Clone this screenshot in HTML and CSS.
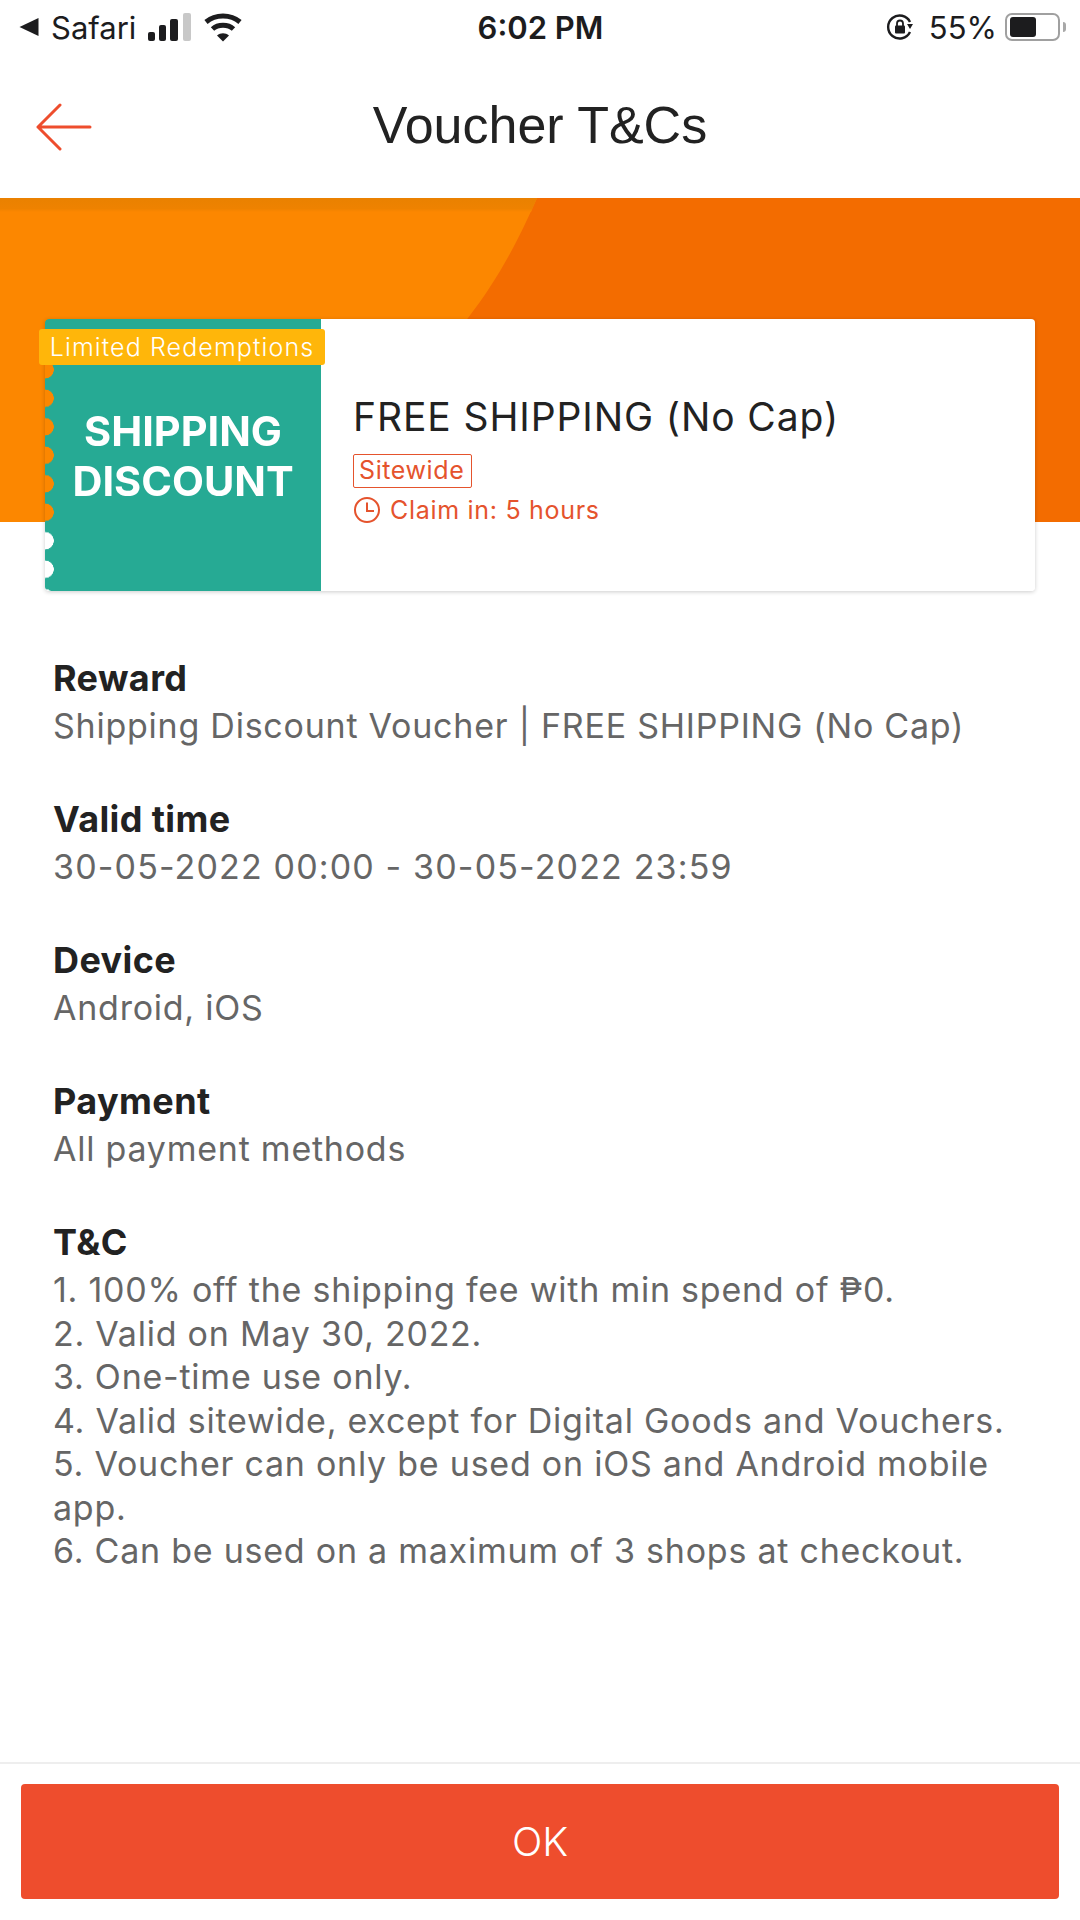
FILE: index.html
```html
<!DOCTYPE html>
<html lang="en">
<head>
    <meta charset="UTF-8">
    <meta name="viewport" content="width=device-width, initial-scale=1.0">
    <title>Voucher T&amp;Cs</title>
    <link rel="stylesheet" href="styles.css">
</head>
<body>
    <div class="page">
        <div class="status-bar">
            <div class="status-left">
                <svg class="back-tri" width="20" height="20" viewBox="0 0 20 20"><path d="M19.500 1v18L.5 10z" fill="#1c1c1e"/></svg>
                <span>Safari</span>
                <svg class="signal" width="43" height="28" viewBox="0 0 43 28">
                    <rect x="0" y="19" width="7" height="9" rx="2" fill="#1c1c1e"/>
                    <rect x="11" y="12" width="7" height="16" rx="2" fill="#1c1c1e"/>
                    <rect x="22" y="6" width="8" height="22" rx="2" fill="#1c1c1e"/>
                    <rect x="35" y="0" width="8" height="28" rx="2" fill="#c8c8c8"/>
                </svg>
                <svg class="wifi" width="38" height="30" viewBox="0 0 38 30">
                    <path d="M2 10C11.500 2 26.500 2 36 10" fill="none" stroke="#1c1c1e" stroke-width="5"/>
                    <path d="M8.500 17C14 12 24 12 29.500 17" fill="none" stroke="#1c1c1e" stroke-width="5"/>
                    <path d="M13 23.500C16.500 20.500 21.500 20.500 25 23.500L19 29.500z" fill="#1c1c1e"/>
                </svg>
            </div>
            <div class="status-time">6:02 PM</div>
            <div class="status-right">
                <svg class="lock" width="28" height="28" viewBox="0 0 28 28">
                    <path d="M24 19A11.500 11.500 0 1 1 24 9" fill="none" stroke="#1c1c1e" stroke-width="2.400"/>
                    <path d="M21 11h6l-3 5z" fill="#1c1c1e"/>
                    <rect x="9" y="12.500" width="10" height="8" rx="1" fill="#1c1c1e"/>
                    <path d="M11 13V10.500a3 3 0 0 1 6 0V13" fill="none" stroke="#1c1c1e" stroke-width="1.800"/>
                </svg>
                <span>55%</span>
                <div class="battery"><div class="battery-fill"></div></div>
                <div class="battery-tip"></div>
            </div>
        </div>

        <div class="title-bar">
            <svg class="back-arrow" width="56" height="48" viewBox="0 0 56 48">
                <path d="M54 24H2M24 2L2 24l22 22" fill="none" stroke="#ee4d2d" stroke-width="3" stroke-linecap="round" stroke-linejoin="round"/>
            </svg>
            <h1 class="title">Voucher T&amp;Cs</h1>
        </div>

        <div class="hero">
            <svg class="hero-wave" width="540" height="324" viewBox="0 0 540 324">
                <defs>
                    <linearGradient id="wave-shade" x1="0" y1="0" x2="0" y2="1">
                        <stop offset="0" stop-color="#ea8100"/>
                        <stop offset="0.75" stop-color="#ee8200"/>
                        <stop offset="1" stop-color="#fc8700"/>
                    </linearGradient>
                </defs>
                <path d="M0 0H537C515 50 495 85 468 120C430 165 400 200 380 324H0z" fill="#fc8700"/>
                <path d="M0 0H537L531 14H0z" fill="url(#wave-shade)"/>
            </svg>
            <div class="ticket">
                <div class="ticket-tag">Limited Redemptions</div>
                <div class="ticket-left">SHIPPING<br>DISCOUNT</div>
                <div class="ticket-right">
                    <div class="ticket-title">FREE SHIPPING (No Cap)</div>
                    <div class="ticket-label">Sitewide</div>
                    <div class="ticket-claim">
                        <svg width="28" height="28" viewBox="0 0 28 28">
                            <circle cx="14" cy="14" r="12" fill="none" stroke="#e5532d" stroke-width="2"/>
                            <path d="M14 6.500V15H21" fill="none" stroke="#e5532d" stroke-width="2"/>
                        </svg>
                        <span>Claim in: 5 hours</span>
                    </div>
                </div>
            </div>
        </div>

        <div class="details">
            <div class="section">
                <div class="section-head">Reward</div>
                <div class="section-body">Shipping Discount Voucher | FREE SHIPPING (No Cap)</div>
            </div>
            <div class="section">
                <div class="section-head">Valid time</div>
                <div class="section-body section-date">30-05-2022 00:00 - 30-05-2022 23:59</div>
            </div>
            <div class="section">
                <div class="section-head">Device</div>
                <div class="section-body">Android, iOS</div>
            </div>
            <div class="section">
                <div class="section-head">Payment</div>
                <div class="section-body">All payment methods</div>
            </div>
            <div class="section">
                <div class="section-head">T&amp;C</div>
                <div class="section-body">
                    1. 100% off the shipping fee with min spend of ₱0.<br>
                    2. Valid on May 30, 2022.<br>
                    3. One-time use only.<br>
                    4. Valid sitewide, except for Digital Goods and Vouchers.<br>
                    5. Voucher can only be used on iOS and Android mobile app.<br>
                    6. Can be used on a maximum of 3 shops at checkout.
                </div>
            </div>
        </div>

        <div class="footer">
            <button class="ok-btn">OK</button>
        </div>
    </div>
</body>
</html>
```

FILE: styles.css
```css
* {
    box-sizing: border-box;
}
body {
    margin: 0;
    background-color: #fff;
    font-family: Inter, "Liberation Sans", sans-serif;
    color: #222;
}
.page {
    width: 1080px;
    height: 1920px;
    display: flex;
    flex-direction: column;
    overflow: hidden;
}
.status-bar {
    height: 54px;
    padding: 0 14px 0 19px;
    display: grid;
    grid-template-columns: 1fr auto 1fr;
    align-items: center;
    font-size: 31px;
    color: #1c1c1e;
}
.status-left {
    display: flex;
    align-items: center;
    gap: 12px;
}
.status-left .wifi {
    margin-left: 1px;
}
.status-time {
    font-weight: 600;
    margin-left: -4px;
}
.status-right {
    display: flex;
    align-items: center;
    justify-content: flex-end;
}
.status-right span {
    margin-left: 15px;
}
.battery {
    width: 55px;
    height: 28px;
    margin-left: 8px;
    padding: 2px 3px;
    border: 2px solid #a0a0a0;
    border-radius: 7px;
}
.battery-fill {
    width: 26px;
    height: 100%;
    background-color: #1c1c1e;
    border-radius: 3px;
}
.battery-tip {
    width: 3px;
    height: 10px;
    margin-left: 3px;
    background-color: #a8a8a8;
    border-radius: 0 3px 3px 0;
}
.title-bar {
    height: 144px;
    position: relative;
    display: flex;
    align-items: center;
    justify-content: center;
    padding-bottom: 3px;
}
.back-arrow {
    position: absolute;
    left: 36px;
    top: 49px;
}
.title {
    margin: 0;
    font-family: "Liberation Sans", Arial, sans-serif;
    font-size: 52px;
    font-weight: 400;
}
.hero {
    position: relative;
    height: 393px;
    padding: 121px 45px 0;
    background: linear-gradient(#f36c00 324px, transparent 324px);
}
.hero-wave {
    position: absolute;
    left: 0;
    top: 0;
}
.ticket {
    position: relative;
    height: 272px;
    display: flex;
    border-radius: 4px;
    box-shadow: 0 1px 4px rgba(0, 0, 0, 0.2);
}
.ticket-tag {
    position: absolute;
    z-index: 1;
    left: -6px;
    top: 10px;
    width: 286px;
    height: 36px;
    background-color: #ffb60a;
    border-radius: 3px;
    color: #fff;
    font-size: 25px;
    line-height: 37px;
    text-align: center;
    letter-spacing: 1.100px;
    font-weight: 300;
    white-space: nowrap;
}
.ticket-left {
    width: 276px;
    padding-top: 87px;
    background-color: #26aa94;
    border-radius: 4px 0 0 4px;
    color: #fff;
    font-size: 41.500px;
    font-weight: 700;
    line-height: 50px;
    text-align: center;
    -webkit-mask:
        linear-gradient(#000, #000) 9px 0 / 100% 100% no-repeat,
        linear-gradient(#000, #000) 0 0 / 9px 30px no-repeat,
        radial-gradient(circle at 0 50%, transparent 8.500px, #000 9px) 0 36.500px / 9px 28.500px repeat-y;
    mask:
        linear-gradient(#000, #000) 9px 0 / 100% 100% no-repeat,
        linear-gradient(#000, #000) 0 0 / 9px 30px no-repeat,
        radial-gradient(circle at 0 50%, transparent 8.500px, #000 9px) 0 36.500px / 9px 28.500px repeat-y;
}
.ticket-right {
    flex: 1;
    padding: 75px 0 0 32px;
    background-color: #fff;
    border-radius: 0 4px 4px 0;
}
.ticket-title {
    font-size: 39px;
    line-height: 46px;
    letter-spacing: 0.9px;
}
.ticket-label {
    width: fit-content;
    height: 34px;
    margin-top: 14px;
    padding: 0 7px 0 5px;
    border: 1.500px solid #e5532d;
    border-radius: 2px;
    color: #e5532d;
    font-size: 25px;
    line-height: 31px;
    letter-spacing: 0.6px;
}
.ticket-claim {
    margin-top: 6px;
    display: flex;
    align-items: center;
    gap: 9px;
    color: #e5532d;
    font-size: 25px;
    line-height: 32px;
    letter-spacing: 0.7px;
}
.details {
    flex: 1;
    padding: 61px 53px 0;
}
.section {
    margin-bottom: 45.500px;
}
.section-head {
    font-size: 36px;
    font-weight: 700;
    line-height: 52px;
    letter-spacing: 0.4px;
}
.section-body {
    font-size: 34px;
    line-height: 43.500px;
    color: #666;
    letter-spacing: 0.76px;
}
.section-date {
    letter-spacing: 1.150px;
}
.footer {
    height: 158px;
    padding: 20px 21px 0;
    border-top: 2px solid #eee;
}
.ok-btn {
    display: block;
    width: 100%;
    height: 115px;
    border: none;
    border-radius: 4px;
    background-color: #ee4d2d;
    color: #fff;
    font-family: inherit;
    font-size: 40px;
    font-weight: 300;
}
```
